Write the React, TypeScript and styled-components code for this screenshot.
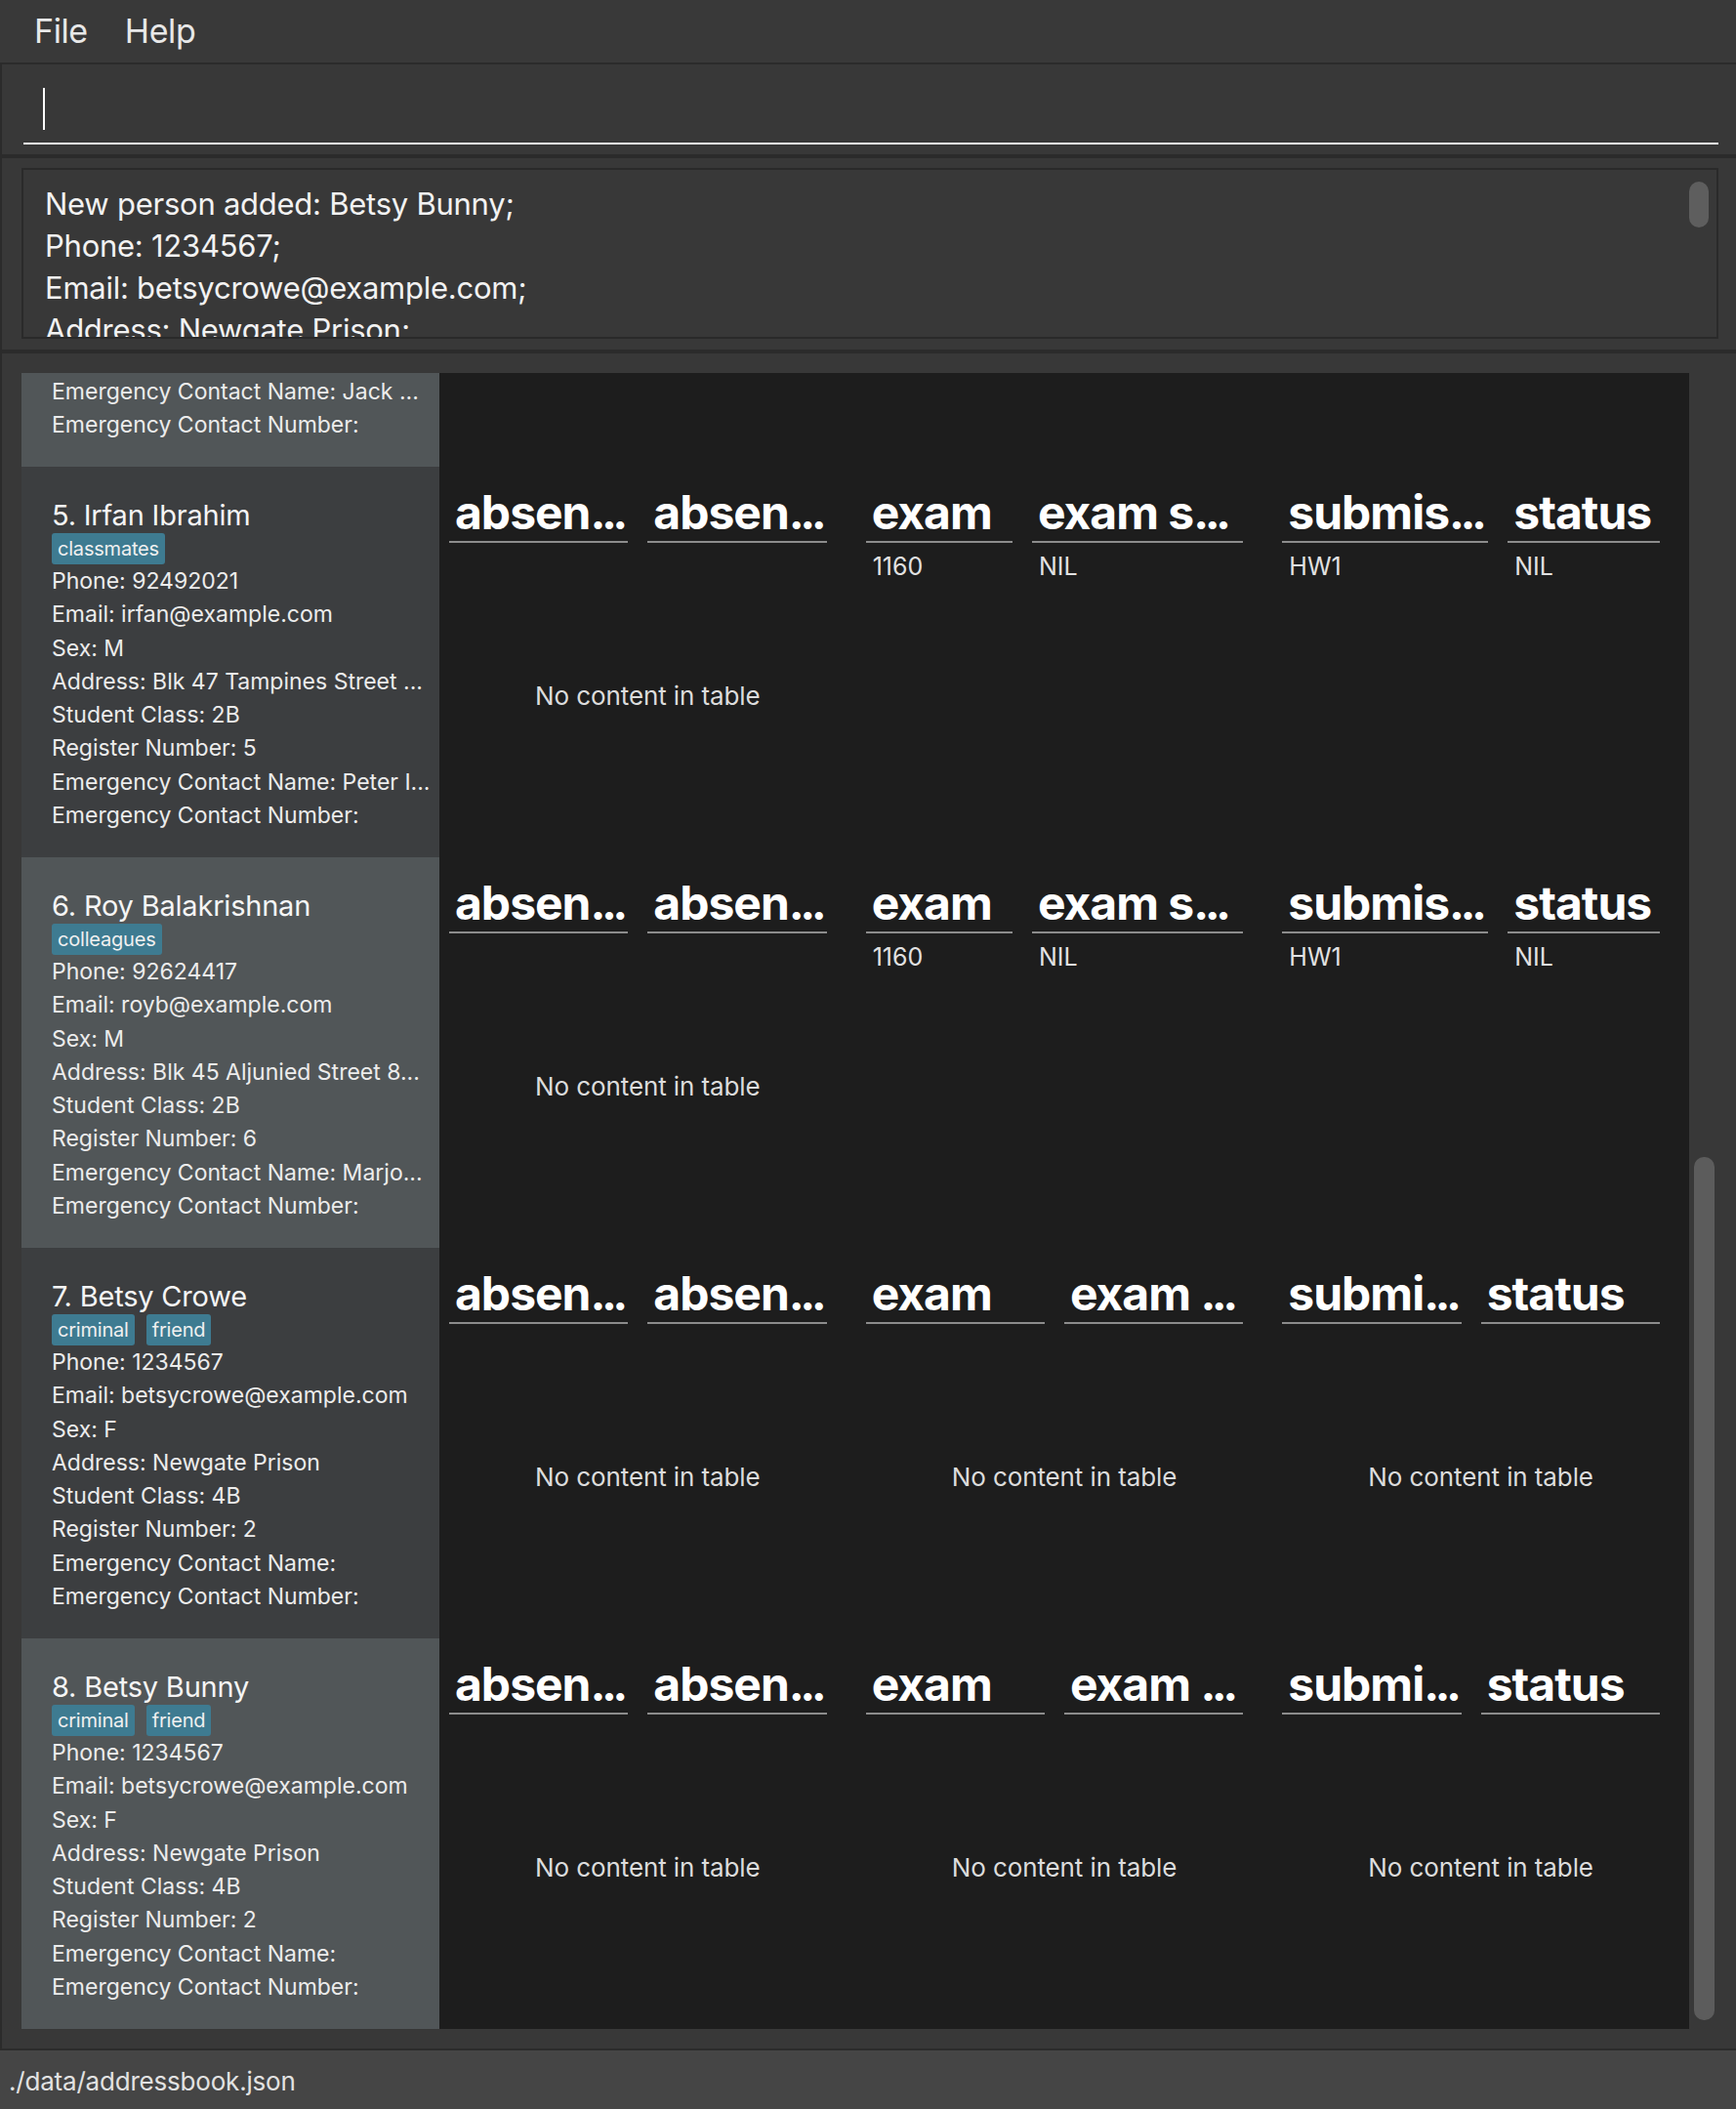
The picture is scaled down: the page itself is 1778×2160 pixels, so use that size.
import React, { useLayoutEffect, useRef } from "react";
import styled, { createGlobalStyle } from "styled-components";

const GlobalStyle = createGlobalStyle`
  html, body { margin: 0; padding: 0; background: #383838; }
  body { font-family: Inter, "Noto Sans", sans-serif; }
  *, *::before, *::after { box-sizing: border-box; }
`;

const Shell = styled.div`
  width: 1778px;
  height: 2160px;
  display: flex;
  flex-direction: column;
  background: #383838;
  overflow: hidden;
`;

const MenuBar = styled.nav`
  height: 66px;
  flex: none;
  display: flex;
  align-items: flex-start;
  gap: 38px;
  padding-left: 35px;
  background: #393939;
  border-bottom: 2px solid #2b2b2b;
`;

const MenuItem = styled.span`
  font-size: 34px;
  line-height: 64px;
  color: #e8e8e8;
  letter-spacing: -0.4px;
`;

const CommandPanel = styled.section`
  height: 96px;
  flex: none;
  display: flex;
  padding: 0 18px 10px 22px;
  border-left: 2px solid #2b2b2b;
  border-bottom: 4px solid #2b2b2b;
`;

const CommandInput = styled.div`
  flex: 1;
  display: flex;
  align-items: flex-start;
  padding: 24px 0 0 20px;
  border-bottom: 2px solid #f4f4f4;
`;

const Caret = styled.span`
  width: 1.5px;
  height: 43px;
  background: #ffffff;
`;

const ResultPanel = styled.section`
  height: 200px;
  flex: none;
  display: flex;
  padding: 10px 18px 11px 20px;
  border-left: 2px solid #2b2b2b;
  border-bottom: 4px solid #2b2b2b;
`;

const ResultBox = styled.div`
  position: relative;
  flex: 1;
  overflow: hidden;
  border: 2px solid #2a2a2a;
  padding: 13px 60px 0 22px;
`;

const ResultText = styled.div`
  font-size: 31px;
  line-height: 43px;
  color: #f2f2f2;
  white-space: pre-line;
  letter-spacing: -0.25px;
`;

const ResultThumb = styled.div`
  position: absolute;
  top: 12px;
  right: 8px;
  width: 20px;
  height: 47px;
  border-radius: 10px;
  background: #5e5e5e;
`;

const ListPanel = styled.section`
  flex: 1;
  min-height: 0;
  display: flex;
  padding: 20px 22px 20px 20px;
  border-left: 2px solid #2b2b2b;
  border-bottom: 2px solid #2b2b2b;
`;

const ListView = styled.div`
  flex: 1;
  min-width: 0;
  overflow-y: scroll;
  scrollbar-width: none;
  &::-webkit-scrollbar { display: none; }
`;

const ScrollTrack = styled.div`
  width: 26px;
  flex: none;
  display: flex;
  flex-direction: column;
  justify-content: flex-end;
  padding: 0 0 9px 5px;
`;

const ScrollThumb = styled.div`
  height: 884px;
  width: 21px;
  border-radius: 10px;
  background: #5c5c5c;
`;

const Row = styled.div`
  display: grid;
  grid-template-columns: 428px 1fr;
  height: 400px;
`;

const Card = styled.div<{ $light: boolean }>`
  background: ${(p) => (p.$light ? "#515658" : "#3c3e40")};
  padding: 32px 4px 0 31px;
  overflow: hidden;
`;

const Name = styled.div`
  font-size: 29px;
  line-height: 36px;
  color: #f5f5f5;
  white-space: nowrap;
  letter-spacing: -0.2px;
`;

const TagRow = styled.div`
  display: flex;
  gap: 12px;
  height: 32px;
`;

const Tag = styled.span`
  height: 32px;
  padding: 0 6px;
  background: #3e7b91;
  border-radius: 3px;
  font-size: 20px;
  line-height: 32px;
  color: #f0f0f0;
  letter-spacing: -0.2px;
`;

const Detail = styled.div`
  font-size: 23px;
  line-height: 34.3px;
  color: #ececec;
  white-space: nowrap;
  overflow: hidden;
`;

const TablesArea = styled.div`
  background: #1d1d1d;
  display: grid;
  grid-template-columns: repeat(3, minmax(0, 1fr));
  column-gap: 20px;
  padding: 17.5px 10px 8px 10px;
`;

const Table = styled.div`
  display: flex;
  flex-direction: column;
  min-width: 0;
`;

const GridRow = styled.div<{ $cols: string }>`
  display: grid;
  grid-template-columns: ${(p) => p.$cols};
  column-gap: 20px;
  padding-right: 20px;
`;

const HeaderCell = styled.div`
  font-size: 48px;
  font-weight: 700;
  line-height: 58px;
  letter-spacing: -1px;
  color: #ffffff;
  padding-left: 6px;
  border-bottom: 2px solid #8c8c8c;
  white-space: nowrap;
  overflow: hidden;
`;

const Dots = styled.span`
  letter-spacing: -4.6px;
`;

const DataCell = styled.div`
  font-size: 25px;
  line-height: 48px;
  height: 48px;
  padding-left: 7px;
  color: #e2e2e2;
  white-space: nowrap;
  overflow: hidden;
`;

const TableBody = styled.div`
  flex: 1;
  display: flex;
  align-items: center;
  justify-content: center;
`;

const Placeholder = styled.span`
  font-size: 26px;
  color: #dcdcdc;
  letter-spacing: -0.1px;
`;

const StatusBar = styled.footer`
  height: 60px;
  flex: none;
  background: #454545;
  padding: 3px 0 0 9px;
  font-size: 26px;
  line-height: 57px;
  color: #e2e2e2;
  letter-spacing: -0.2px;
`;

type TableDef = { headers: string[]; cols: string; data?: string[] };

type Person = {
  idx: number;
  name: string;
  tags: string[];
  lines: string[];
  tables: TableDef[];
};

const emptyTables: TableDef[] = [
  { headers: ["absen...", "absen..."], cols: "1fr 1fr" },
  { headers: ["exam", "exam ..."], cols: "1fr 1fr" },
  { headers: ["submi...", "status"], cols: "1fr 1fr" },
];

const filledTables: TableDef[] = [
  { headers: ["absen...", "absen..."], cols: "1fr 1fr" },
  { headers: ["exam", "exam s..."], cols: "150fr 216fr", data: ["1160", "NIL"] },
  { headers: ["submis...", "status"], cols: "210fr 155fr", data: ["HW1", "NIL"] },
];

const people: Person[] = [
  {
    idx: 1,
    name: "Alex Yeoh",
    tags: ["friends"],
    lines: [
      "Phone: 87438807",
      "Email: alexyeoh@example.com",
      "Sex: M",
      "Address: Blk 30 Geylang Stre...",
      "Student Class: 1A",
      "Register Number: 1",
      "Emergency Contact Name: Mar...",
      "Emergency Contact Number:",
    ],
    tables: filledTables,
  },
  {
    idx: 2,
    name: "Bernice Yu",
    tags: ["colleagues", "friends"],
    lines: [
      "Phone: 99272758",
      "Email: berniceyu@example.com",
      "Sex: F",
      "Address: Blk 30 Lorong 3 Se...",
      "Student Class: 1A",
      "Register Number: 2",
      "Emergency Contact Name: Jam...",
      "Emergency Contact Number:",
    ],
    tables: filledTables,
  },
  {
    idx: 3,
    name: "Charlotte Oliveiro",
    tags: ["neighbours"],
    lines: [
      "Phone: 93210283",
      "Email: charlotte@example.com",
      "Sex: F",
      "Address: Blk 11 Ang Mo Kio S...",
      "Student Class: 1B",
      "Register Number: 3",
      "Emergency Contact Name: Sar...",
      "Emergency Contact Number:",
    ],
    tables: filledTables,
  },
  {
    idx: 4,
    name: "David Li",
    tags: ["family"],
    lines: [
      "Phone: 91031282",
      "Email: lidavid@example.com",
      "Sex: M",
      "Address: Blk 436 Serangoon ...",
      "Student Class: 1B",
      "Register Number: 4",
      "Emergency Contact Name: Jack ...",
      "Emergency Contact Number:",
    ],
    tables: filledTables,
  },
  {
    idx: 5,
    name: "Irfan Ibrahim",
    tags: ["classmates"],
    lines: [
      "Phone: 92492021",
      "Email: irfan@example.com",
      "Sex: M",
      "Address: Blk 47 Tampines Street ...",
      "Student Class: 2B",
      "Register Number: 5",
      "Emergency Contact Name: Peter I...",
      "Emergency Contact Number:",
    ],
    tables: filledTables,
  },
  {
    idx: 6,
    name: "Roy Balakrishnan",
    tags: ["colleagues"],
    lines: [
      "Phone: 92624417",
      "Email: royb@example.com",
      "Sex: M",
      "Address: Blk 45 Aljunied Street 8...",
      "Student Class: 2B",
      "Register Number: 6",
      "Emergency Contact Name: Marjo...",
      "Emergency Contact Number:",
    ],
    tables: filledTables,
  },
  {
    idx: 7,
    name: "Betsy Crowe",
    tags: ["criminal", "friend"],
    lines: [
      "Phone: 1234567",
      "Email: betsycrowe@example.com",
      "Sex: F",
      "Address: Newgate Prison",
      "Student Class: 4B",
      "Register Number: 2",
      "Emergency Contact Name:",
      "Emergency Contact Number:",
    ],
    tables: emptyTables,
  },
  {
    idx: 8,
    name: "Betsy Bunny",
    tags: ["criminal", "friend"],
    lines: [
      "Phone: 1234567",
      "Email: betsycrowe@example.com",
      "Sex: F",
      "Address: Newgate Prison",
      "Student Class: 4B",
      "Register Number: 2",
      "Emergency Contact Name:",
      "Emergency Contact Number:",
    ],
    tables: emptyTables,
  },
];

const resultMessage = [
  "New person added: Betsy Bunny;",
  "Phone: 1234567;",
  "Email: betsycrowe@example.com;",
  "Address: Newgate Prison;",
  "Sex: F;",
  "Student Class: 4B;",
  "Register Number: 2;",
  "Tags: [criminal][friend]",
].join("\n");

function HeaderText({ text }: { text: string }) {
  if (!text.endsWith("...")) return <>{text}</>;
  return (
    <>
      {text.slice(0, -3)}
      <Dots>...</Dots>
    </>
  );
}

function InfoTable({ def }: { def: TableDef }) {
  return (
    <Table>
      <GridRow $cols={def.cols}>
        {def.headers.map((h, i) => (
          <HeaderCell key={i}>
            <HeaderText text={h} />
          </HeaderCell>
        ))}
      </GridRow>
      {def.data ? (
        <>
          <GridRow $cols={def.cols}>
            {def.data.map((d, i) => (
              <DataCell key={i}>{d}</DataCell>
            ))}
          </GridRow>
          <TableBody />
        </>
      ) : (
        <TableBody>
          <Placeholder>No content in table</Placeholder>
        </TableBody>
      )}
    </Table>
  );
}

function PersonRow({ p }: { p: Person }) {
  return (
    <Row>
      <Card $light={p.idx % 2 === 0}>
        <Name>
          {p.idx}. {p.name}
        </Name>
        <TagRow>
          {p.tags.map((t) => (
            <Tag key={t}>{t}</Tag>
          ))}
        </TagRow>
        {p.lines.map((l, i) => (
          <Detail key={i}>{l}</Detail>
        ))}
      </Card>
      <TablesArea>
        {p.tables.map((t, i) => (
          <InfoTable key={i} def={t} />
        ))}
      </TablesArea>
    </Row>
  );
}

export default function App() {
  const listRef = useRef<HTMLDivElement>(null);
  useLayoutEffect(() => {
    const el = listRef.current;
    if (el) el.scrollTop = el.scrollHeight;
  }, []);

  return (
    <>
      <GlobalStyle />
      <Shell>
        <MenuBar>
          <MenuItem>File</MenuItem>
          <MenuItem>Help</MenuItem>
        </MenuBar>
        <CommandPanel>
          <CommandInput>
            <Caret />
          </CommandInput>
        </CommandPanel>
        <ResultPanel>
          <ResultBox>
            <ResultText>{resultMessage}</ResultText>
            <ResultThumb />
          </ResultBox>
        </ResultPanel>
        <ListPanel>
          <ListView ref={listRef}>
            {people.map((p) => (
              <PersonRow key={p.idx} p={p} />
            ))}
          </ListView>
          <ScrollTrack>
            <ScrollThumb />
          </ScrollTrack>
        </ListPanel>
        <StatusBar>./data/addressbook.json</StatusBar>
      </Shell>
    </>
  );
}
